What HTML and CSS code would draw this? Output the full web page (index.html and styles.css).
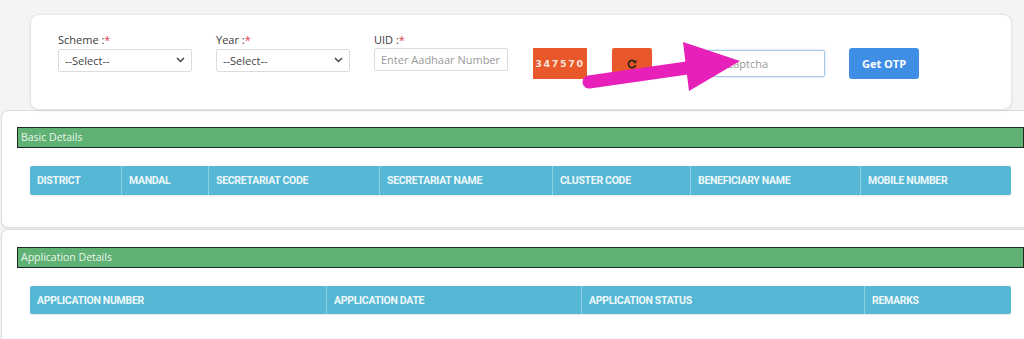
FILE: index.html
```html
<!DOCTYPE html>
<html lang="en">
  <head>
    <meta charset="UTF-8" />
    <meta name="viewport" content="width=device-width, initial-scale=1.0" />
    <title>Beneficiary Status</title>
    <link rel="stylesheet" href="styles.css">
  </head>
  <body>
    <div class="search-card">
      <div class="field">
        <label for="scheme">Scheme :<span class="req">*</span></label>
        <div class="select-wrap">
          <select id="scheme">
            <option>--Select--</option>
          </select>
          <svg class="chevron" width="9" height="6" viewBox="0 0 9 6"><path d="M1 1l3.5 3.5L8 1" fill="none" stroke="#444" stroke-width="1.5"/></svg>
        </div>
      </div>

      <div class="field">
        <label for="year">Year :<span class="req">*</span></label>
        <div class="select-wrap">
          <select id="year">
            <option>--Select--</option>
          </select>
          <svg class="chevron" width="9" height="6" viewBox="0 0 9 6"><path d="M1 1l3.5 3.5L8 1" fill="none" stroke="#444" stroke-width="1.5"/></svg>
        </div>
      </div>

      <div class="field">
        <label for="uid">UID :<span class="req">*</span></label>
        <input type="text" id="uid" placeholder="Enter Aadhaar Number" />
      </div>

      <div class="captcha-group">
        <div class="captcha-code">347570</div>
        <button class="refresh-btn" title="Refresh">
          <svg width="10" height="10" viewBox="0 0 10 10"><path d="M8.2 3.2A3.6 3.6 0 1 0 8.6 6" fill="none" stroke="#3a2418" stroke-width="1.8"/><path d="M9.4 0.8v3.4H6z" fill="#3a2418"/></svg>
        </button>
        <input type="text" class="captcha-input" placeholder="Enter Captcha" />
        <button class="otp-btn">Get OTP</button>
      </div>

      <!-- annotation arrow drawn over the form -->
      <svg class="pointer" width="1024" height="110" viewBox="0 0 1024 110">
        <line x1="589" y1="82" x2="694" y2="67" stroke="#e620b9" stroke-width="13" stroke-linecap="round"/>
        <polygon points="683,42 689,91 740,61" fill="#e620b9"/>
      </svg>
    </div>

    <div class="details-card">
      <div class="section-bar">Basic Details</div>
      <div class="table-head basic">
        <div>DISTRICT</div>
        <div>MANDAL</div>
        <div>SECRETARIAT CODE</div>
        <div>SECRETARIAT NAME</div>
        <div>CLUSTER CODE</div>
        <div>BENEFICIARY NAME</div>
        <div>MOBILE NUMBER</div>
      </div>
    </div>

    <div class="details-card last">
      <div class="section-bar">Application Details</div>
      <div class="table-head application">
        <div>APPLICATION NUMBER</div>
        <div>APPLICATION DATE</div>
        <div>APPLICATION STATUS</div>
        <div>REMARKS</div>
      </div>
    </div>
  </body>
</html>
```

FILE: styles.css
```css
body {
  font-family: "Open Sans", sans-serif;
  background-color: #f4f4f4;
  color: #333;
  margin: 0;
  padding-top: 14px;
  overflow: hidden;
}

.search-card {
  position: relative;
  display: flex;
  align-items: flex-start;
  gap: 25px;
  margin: 0 12px 0 30px;
  height: 96px;
  box-sizing: border-box;
  padding: 17px 27px 0;
  background-color: #fff;
  border: 1px solid #e6e6e6;
  border-radius: 9px;
  box-shadow: 0 1px 3px rgba(0, 0, 0, 0.08);
}

.field {
  display: flex;
  flex-direction: column;
  width: 134px;
}

.field + .field {
  margin-left: -1px;
}

label {
  font-size: 11px;
  line-height: 16px;
  color: #3a3a3a;
}

.req {
  color: #e0404a;
}

.select-wrap {
  position: relative;
}

select,
input {
  font-family: "Open Sans", sans-serif;
  font-size: 11px;
  width: 100%;
  height: 23px;
  box-sizing: border-box;
  border: 1px solid #dcdcdc;
  border-radius: 2px;
  background-color: #fff;
  color: #444;
  padding: 0 6px;
  appearance: none;
  outline: none;
}

input::placeholder {
  color: #9a9a9a;
}

.chevron {
  position: absolute;
  right: 7px;
  top: 9px;
}

.captcha-group {
  display: flex;
  align-items: center;
  gap: 25px;
  margin-top: 16px;
}

.captcha-code {
  width: 54px;
  height: 31px;
  background-color: #e8582b;
  color: #fbe3d8;
  font-family: "DejaVu Sans", sans-serif;
  font-weight: bold;
  font-size: 9.5px;
  letter-spacing: 1.6px;
  display: flex;
  align-items: center;
  justify-content: center;
}

.refresh-btn {
  width: 40px;
  height: 31px;
  border: none;
  border-radius: 2px;
  background-color: #e8582b;
  display: flex;
  align-items: center;
  justify-content: center;
  padding: 0;
}

.captcha-input {
  width: 138px;
  height: 27px;
  margin-left: 10px;
  border: 1px solid #a9c8e6;
  box-shadow: 0 0 3px rgba(90, 150, 220, 0.35);
  padding-left: 8px;
}

.otp-btn {
  width: 70px;
  height: 31px;
  border: none;
  border-radius: 3px;
  background-color: #3e8ee6;
  color: #fff;
  font-family: "Open Sans", sans-serif;
  font-weight: 700;
  font-size: 11px;
  margin-left: -1px;
}

.pointer {
  position: absolute;
  left: -31px;
  top: -15px;
  pointer-events: none;
}

.details-card {
  margin-left: 1px;
  height: 118px;
  box-sizing: border-box;
  padding: 16px 0 0 15px;
  background-color: #fff;
  border: 1px solid #dedede;
  border-right: none;
  border-radius: 7px 0 0 7px;
  box-shadow: 0 1px 2px rgba(0, 0, 0, 0.06);
}

.details-card.last {
  margin-top: 1px;
  height: 120px;
  padding-top: 17px;
}

.section-bar {
  height: 21px;
  box-sizing: border-box;
  background-color: #5fb174;
  border: 1.5px solid #1c2b1f;
  color: #eaf6ec;
  font-size: 10.5px;
  line-height: 18px;
  padding-left: 3px;
}

.table-head {
  display: grid;
  width: 981px;
  height: 29px;
  margin: 18px 0 0 13px;
  background-color: #54b7d3;
  border-radius: 2px;
  box-shadow: 0 1px 2px rgba(0, 0, 0, 0.1);
}

.table-head.basic {
  grid-template-columns: 91px 87px 171px 173px 138px 170px 151px;
}

.table-head.application {
  grid-template-columns: 296px 255px 283px 147px;
  height: 28px;
}

.table-head div {
  display: flex;
  align-items: center;
  padding-left: 7px;
  font-family: "Roboto", sans-serif;
  font-weight: 700;
  font-size: 10.5px;
  letter-spacing: -0.3px;
  color: #eef8fb;
  border-left: 1px solid #8ccfe2;
}

.table-head div:first-child {
  border-left: none;
}
```
